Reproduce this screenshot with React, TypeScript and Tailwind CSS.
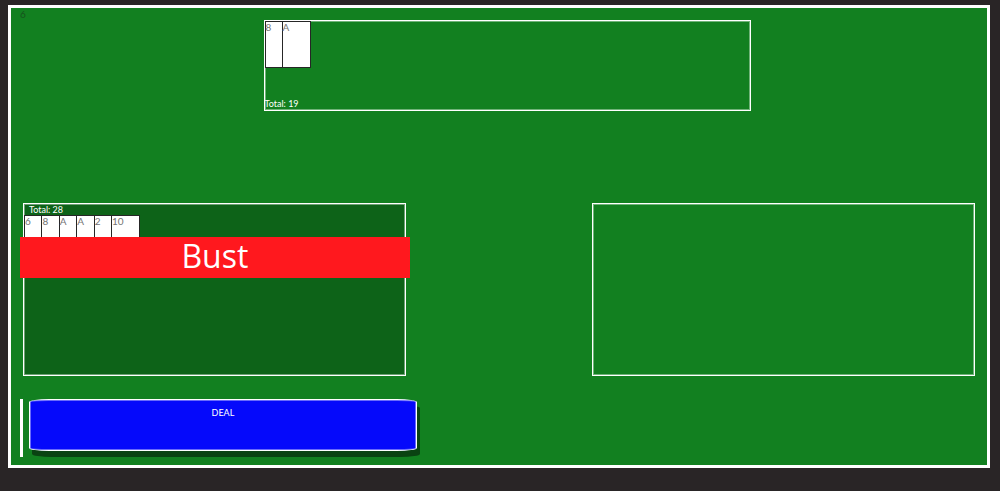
import React from "react";

function Hand({ cards, wide }: { cards: string[]; wide?: boolean }) {
  return (
    <ul className={wide ? "flex w-[116px]" : "flex w-[46px]"}>
      {cards.map((card, i) => (
        <li key={i} className="min-w-0 flex-1 last:w-[29px] last:flex-none">
          <div className="h-[47px] w-[29px] border border-neutral-800 bg-white text-[10px] leading-[11px] text-neutral-500">
            {card}
          </div>
        </li>
      ))}
    </ul>
  );
}

export default function App() {
  return (
    <main className="min-h-screen bg-[#292526] pt-[5px] pr-[10px] pb-[23px] pl-2 font-[Lato,sans-serif] text-[9px] leading-[12px] text-white">
      <div className="border-[3px] border-white bg-[#128020] pr-3 pb-2 pl-[9px]">
        <header className="flex h-3 items-center text-[10px] text-[#16521c]">6</header>

        <section
          aria-label="Dealer"
          className="ml-[25.5%] flex h-[91px] w-[51%] flex-col justify-between border border-white ring-1 ring-white/40 ring-inset"
        >
          <Hand cards={["8", "A"]} />
          <p>Total: 19</p>
        </section>

        <div className="mt-[92px] flex justify-between pl-[3px]">
          <section
            aria-label="Player one"
            className="relative h-[173px] w-[40.2%] border border-white bg-[#0d6318] ring-1 ring-white/40 ring-inset"
          >
            <p className="h-[11px] pl-[5px]">Total: 28</p>
            <Hand cards={["6", "8", "A", "A", "2", "10"]} wide />
            <div className="absolute top-[33px] -right-[5px] -left-1 h-[41px] bg-[#ff181e] text-center font-['Open_Sans',sans-serif] text-[32px] leading-[38px]">
              Bust
            </div>
          </section>
          <section
            aria-label="Player two"
            className="h-[173px] w-[40.2%] border border-white ring-1 ring-white/40 ring-inset"
          />
        </div>

        <div className="mt-[23px] h-[58px] border-l-[3px] border-white pl-[6px]">
          <button
            type="button"
            className="flex h-[52px] w-[41%] items-start justify-center rounded-[20px/3px] border border-white bg-[#0509fb] pt-[7px] shadow-[3px_6px_0_#0a4312] ring-1 ring-white/40 ring-inset"
          >
            DEAL
          </button>
        </div>
      </div>
    </main>
  );
}
